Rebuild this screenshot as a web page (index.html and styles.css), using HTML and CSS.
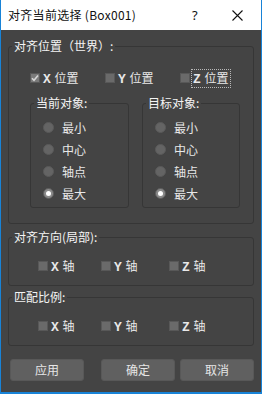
FILE: index.html
```html
<!DOCTYPE html>
<html lang="zh">
<head>
<meta charset="utf-8">
<link rel="stylesheet" href="styles.css">
</head>
<body>
<div class="window">
  <div class="titlebar">
    <span class="title">对齐当前选择 (Box001)</span>
    <span class="help">?</span>
    <span class="close"><svg width="11" height="11" viewBox="0 0 11 11"><path d="M0.5 0.5 L10.5 10.5 M10.5 0.5 L0.5 10.5" stroke="#111" stroke-width="1.1" fill="none"/></svg></span>
  </div>
  <div class="body">
    <fieldset class="group g1">
      <legend>对齐位置（世界）:</legend>
      <div class="g1-inner">
        <div class="checks checks1">
          <div class="check"><span class="box checked"><svg width="8" height="8" viewBox="0 0 8 8"><path d="M1 4.2 L3 6.2 L7 1.5" stroke="#d6d6d6" stroke-width="1.6" fill="none"/></svg></span><span class="lbl"><span class="ax">X</span> 位置</span></div>
          <div class="check"><span class="box"></span><span class="lbl"><span class="ax">Y</span> 位置</span></div>
          <div class="check"><span class="box"></span><span class="lbl focus"><span class="ax">Z</span> 位置</span></div>
        </div>
        <div class="subs">
          <fieldset class="group sub">
            <legend>当前对象:</legend>
            <div class="radios">
              <div class="radio"><span class="dot"></span>最小</div>
              <div class="radio"><span class="dot"></span>中心</div>
              <div class="radio"><span class="dot"></span>轴点</div>
              <div class="radio"><span class="dot on"></span>最大</div>
            </div>
          </fieldset>
          <fieldset class="group sub">
            <legend>目标对象:</legend>
            <div class="radios">
              <div class="radio"><span class="dot"></span>最小</div>
              <div class="radio"><span class="dot"></span>中心</div>
              <div class="radio"><span class="dot"></span>轴点</div>
              <div class="radio"><span class="dot on"></span>最大</div>
            </div>
          </fieldset>
        </div>
      </div>
    </fieldset>
    <fieldset class="group g2">
      <legend>对齐方向(局部):</legend>
      <div class="checks checks2">
        <div class="check"><span class="box"></span><span class="lbl"><span class="ax">X</span> 轴</span></div>
        <div class="check"><span class="box"></span><span class="lbl"><span class="ax">Y</span> 轴</span></div>
        <div class="check"><span class="box"></span><span class="lbl"><span class="ax">Z</span> 轴</span></div>
      </div>
    </fieldset>
    <fieldset class="group g3">
      <legend>匹配比例:</legend>
      <div class="checks checks2">
        <div class="check"><span class="box"></span><span class="lbl"><span class="ax">X</span> 轴</span></div>
        <div class="check"><span class="box"></span><span class="lbl"><span class="ax">Y</span> 轴</span></div>
        <div class="check"><span class="box"></span><span class="lbl"><span class="ax">Z</span> 轴</span></div>
      </div>
    </fieldset>
    <div class="buttons">
      <button class="btn">应用</button>
      <span class="spacer"></span>
      <button class="btn">确定</button>
      <button class="btn">取消</button>
    </div>
  </div>
</div>
</body>
</html>
```
FILE: styles.css
```css
* { box-sizing: border-box; }
html, body { margin: 0; padding: 0; }
body {
  width: 262px;
  height: 394px;
  overflow: hidden;
  font-family: "Noto Sans CJK SC", "Noto Sans", sans-serif;
  font-size: 12px;
}
.window {
  width: 262px;
  height: 394px;
  border-left: 1px solid #1883d7;
  border-right: 1px solid #1883d7;
  border-bottom: 2px solid #1883d7;
  background: #444444;
  display: flex;
  flex-direction: column;
}
.titlebar {
  height: 30px;
  background: #ffffff;
  display: flex;
  align-items: center;
  color: #111;
  flex: none;
}
.title {
  margin-left: 7px;
  font-size: 12px;
  line-height: 16px;
  width: 184px;
  letter-spacing: 0.3px;
}
.help {
  font-family: "Noto Sans", sans-serif;
  font-size: 13px;
  line-height: 16px;
  width: 40px;
}
.close {
  display: flex;
  align-items: center;
}
.body {
  display: flex;
  flex-direction: column;
  color: #e8e8e8;
  padding: 0 7px 0 7px;
}
.group {
  margin: 0;
  padding: 0;
  border: 1px solid #363636;
  border-radius: 3px;
  min-width: 0;
}
.group > legend {
  padding: 0 2px;
  margin-left: 3px;
  line-height: 14px;
  color: #f4f4f4;
  font-size: 12px;
}
.g1 { margin-top: 9px; }
.g1-inner { padding: 17px 0 15px 21px; }
.checks { display: grid; align-items: center; }
.checks1 { grid-template-columns: 75px 75px 60px; }
.check {
  display: flex;
  align-items: center;
  height: 16px;
}
.box {
  width: 10px;
  height: 10px;
  background: #6a6a6a;
  border: 1px solid #585858;
  display: flex;
  align-items: center;
  justify-content: center;
  flex: none;
}
.box.checked { background: #7a7a7a; }
.lbl {
  margin-left: 2px;
  line-height: 15px;
  padding: 0 1px;
  white-space: nowrap;
}
.ax {
  font-family: "Liberation Mono", "DejaVu Sans Mono", monospace;
  font-size: 13px;
  font-weight: bold;
  margin-right: 1px;
}
.focus { outline: 1px dotted #b8b8b8; outline-offset: 0; }
.subs {
  display: flex;
  gap: 13px;
  margin-top: 10px;
}
.sub { width: 99px; }
.sub:last-child { width: 98px; }
.radios {
  display: flex;
  flex-direction: column;
  padding: 6px 0 3px 12px;
}
.radio {
  display: flex;
  align-items: center;
  height: 22px;
  gap: 8px;
}
.dot {
  width: 11px;
  height: 11px;
  border-radius: 50%;
  background: #646464;
  border: 1px solid #5a5a5a;
  flex: none;
  display: flex;
  align-items: center;
  justify-content: center;
}
.dot.on { background: #8a8a8a; border-color: #5c5c5c; }
.dot.on::after {
  content: "";
  width: 5px;
  height: 5px;
  border-radius: 50%;
  background: #ffffff;
}
.g2 { margin-top: 6px; }
.g3 { margin-top: 4px; }
.checks2 {
  grid-template-columns: 63px 68px 60px;
  padding: 14px 0 11px 29px;
}
.buttons {
  display: flex;
  margin-top: 13px;
  padding-left: 2px;
}
.btn {
  width: 74px;
  height: 22px;
  background: #606060;
  border: 1px solid #585858;
  border-radius: 3px;
  color: #e6e6e6;
  font-family: "Noto Sans CJK SC", sans-serif;
  font-size: 12px;
  padding: 0;
  line-height: 18px;
}
.spacer { width: 17px; }
.buttons .btn + .btn { margin-left: 5px; }
```
